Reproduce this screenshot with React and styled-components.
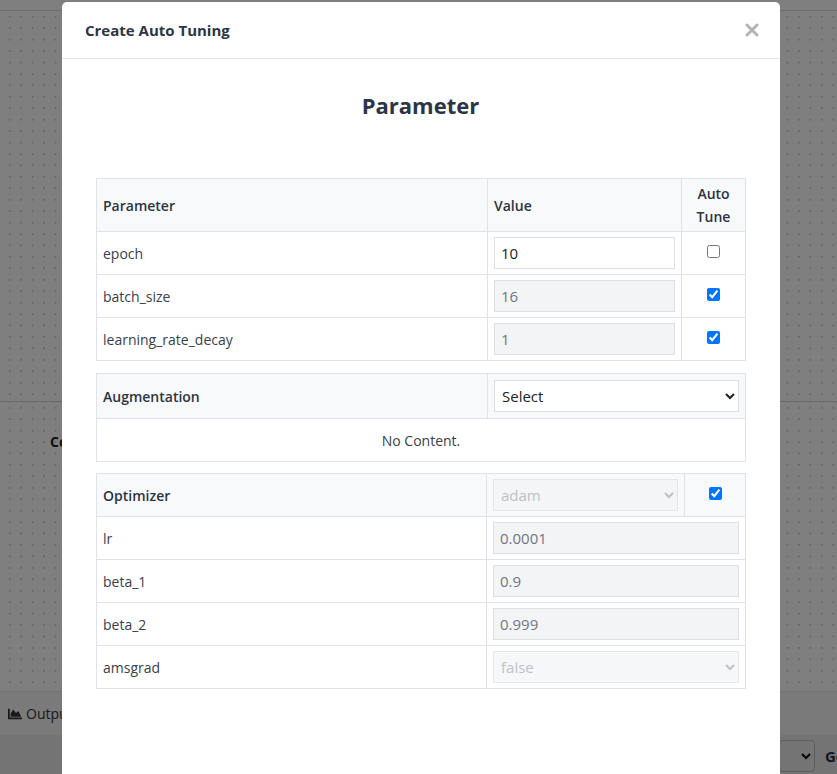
import React from 'react';
import styled, { createGlobalStyle } from 'styled-components';
import { FaChartArea } from 'react-icons/fa';

const GlobalStyle = createGlobalStyle`
    html, body {
        margin: 0;
        padding: 0;
        height: 100%;
        overflow: hidden;
        font-family: "Open Sans", "Noto Sans", "Liberation Sans", sans-serif;
        color: #2d3440;
    }
    * { box-sizing: border-box; }
`;

const BASE_PARAMS = [
    { name: 'epoch', value: '10', auto: false },
    { name: 'batch_size', value: '16', auto: true },
    { name: 'learning_rate_decay', value: '1', auto: true },
];

const OPTIMIZER_PARAMS = [
    { name: 'lr', value: '0.0001' },
    { name: 'beta_1', value: '0.9' },
    { name: 'beta_2', value: '0.999' },
    { name: 'amsgrad', value: 'false', select: true },
];

function ParamRow ({ item }) {
    return (
        <tr>
            <Cell $h={43}>{item.name}</Cell>
            <Cell $h={43}>
                <TextInput defaultValue={item.value} disabled={item.auto} />
            </Cell>
            <Cell $h={43} $center>
                <Check type="checkbox" defaultChecked={item.auto} />
            </Cell>
        </tr>
    );
}

function OptimizerRow ({ item }) {
    return (
        <tr>
            <Cell $h={43}>{item.name}</Cell>
            <Cell $h={43} colSpan={2}>
                {item.select ? (
                    <Dropdown disabled defaultValue={item.value}>
                        <option value="false">false</option>
                        <option value="true">true</option>
                    </Dropdown>
                ) : (
                    <TextInput defaultValue={item.value} disabled />
                )}
            </Cell>
        </tr>
    );
}

const App = () => {
    return (
        <>
            <GlobalStyle />
            <Page>
                <TopBar />
                <Canvas />
                <Section>
                    <SectionTitle>Configuration</SectionTitle>
                </Section>
                <TabBar>
                    <Tab><FaChartArea size={14} /> Output</Tab>
                </TabBar>
                <BottomBar>
                    <SmallSelect><option value=""></option></SmallSelect>
                    <GoLabel>Go</GoLabel>
                </BottomBar>
            </Page>

            <Overlay>
                <Modal>
                    <ModalHeader>
                        <ModalTitle>Create Auto Tuning</ModalTitle>
                        <CloseButton aria-label="close">
                            <svg width="14" height="14" viewBox="0 0 14 14">
                                <path d="M2 2 L12 12 M12 2 L2 12" stroke="#b4b4b4" strokeWidth="3" strokeLinecap="round" />
                            </svg>
                        </CloseButton>
                    </ModalHeader>
                    <ModalBody>
                        <Heading>Parameter</Heading>

                        <Table $gap={12}>
                            <colgroup>
                                <col style={{ width: 391 }} />
                                <col style={{ width: 194 }} />
                                <col style={{ width: 64 }} />
                            </colgroup>
                            <thead>
                                <tr>
                                    <HeadCell $h={53}>Parameter</HeadCell>
                                    <HeadCell $h={53}>Value</HeadCell>
                                    <HeadCell $h={53} $center>Auto<br />Tune</HeadCell>
                                </tr>
                            </thead>
                            <tbody>
                                {BASE_PARAMS.map((item) => (<ParamRow key={item.name} item={item} />))}
                            </tbody>
                        </Table>

                        <Table $gap={11}>
                            <colgroup>
                                <col style={{ width: 391 }} />
                                <col style={{ width: 258 }} />
                            </colgroup>
                            <thead>
                                <tr>
                                    <HeadCell $h={45}>Augmentation</HeadCell>
                                    <HeadCell $h={45}>
                                        <Dropdown defaultValue="">
                                            <option value="">Select</option>
                                            <option value="flip">flip</option>
                                        </Dropdown>
                                    </HeadCell>
                                </tr>
                            </thead>
                            <tbody>
                                <tr>
                                    <Cell $h={43} $center colSpan={2}>No Content.</Cell>
                                </tr>
                            </tbody>
                        </Table>

                        <Table $gap={12}>
                            <colgroup>
                                <col style={{ width: 390 }} />
                                <col style={{ width: 198 }} />
                                <col style={{ width: 61 }} />
                            </colgroup>
                            <thead>
                                <tr>
                                    <HeadCell $h={43}>Optimizer</HeadCell>
                                    <HeadCell $h={43}>
                                        <Dropdown disabled defaultValue="adam">
                                            <option value="adam">adam</option>
                                            <option value="sgd">sgd</option>
                                        </Dropdown>
                                    </HeadCell>
                                    <HeadCell $h={43} $center>
                                        <Check type="checkbox" defaultChecked />
                                    </HeadCell>
                                </tr>
                            </thead>
                            <tbody>
                                {OPTIMIZER_PARAMS.map((item) => (<OptimizerRow key={item.name} item={item} />))}
                            </tbody>
                        </Table>
                    </ModalBody>
                </Modal>
            </Overlay>
        </>
    );
};

export default App;

// ---------------- background page ----------------
const Page = styled.div`
    height: 100vh;
    display: flex;
    flex-direction: column;
    background: #ffffff;
`;
const TopBar = styled.div`
    height: 11px;
    border-bottom: 1px solid #dadada;
    background: #fff;
`;
const dots = `
    background-color: #ffffff;
    background-image: radial-gradient(circle, #d4d4d4 1.1px, transparent 1.3px);
    background-size: 11.45px 11.45px;
    background-position: 4px 0px;
`;
const Canvas = styled.div`
    height: 391px;
    ${dots}
    border-bottom: 1px solid #d0d0d0;
`;
const Section = styled.div`
    flex: 1;
    ${dots}
    padding: 30px 0 0 50px;
    border-bottom: 1px solid #e4e4e4;
`;
const SectionTitle = styled.div`
    font-size: 14px;
    font-weight: 700;
    color: #222;
`;
const TabBar = styled.div`
    height: 43px;
    display: flex;
    background: #f4f4f4;
`;
const Tab = styled.div`
    display: flex;
    align-items: center;
    gap: 4px;
    padding: 0 10px 0 8px;
    background: #f4f4f4;
    font-size: 14px;
    color: #333;
`;
const BottomBar = styled.div`
    height: 39px;
    display: flex;
    justify-content: flex-end;
    align-items: flex-start;
    gap: 10px;
    background: #e9e9e9;
    overflow: hidden;
`;
const SmallSelect = styled.select`
    width: 36px;
    height: 32px;
    margin-top: 5px;
    border: 1px solid #bbb;
    border-radius: 4px;
    background: #e9e9e9;
`;
const GoLabel = styled.div`
    width: 12px;
    font-size: 15px;
    font-weight: 700;
    line-height: 20px;
    color: #1f2f44;
    margin-top: 11px;
    overflow: hidden;
`;

// ---------------- modal ----------------
const Overlay = styled.div`
    position: fixed;
    inset: 0;
    background: rgba(0, 0, 0, 0.5);
    padding: 2px 0 0 62px;
`;
const Modal = styled.div`
    width: 718px;
    height: 820px;
    background: #ffffff;
    border-radius: 5px 5px 0 0;
    display: flex;
    flex-direction: column;
`;
const ModalHeader = styled.div`
    height: 57px;
    flex-shrink: 0;
    display: flex;
    align-items: center;
    justify-content: space-between;
    padding: 0 21px 0 23px;
    border-bottom: 1px solid #e4e4e4;
`;
const ModalTitle = styled.div`
    font-size: 15px;
    font-weight: 700;
    color: #2b3545;
`;
const CloseButton = styled.button`
    border: none;
    background: none;
    padding: 0;
    display: flex;
    cursor: pointer;
`;
const ModalBody = styled.div`
    padding: 30px 35px 0 34px;
`;
const Heading = styled.h2`
    margin: 0 0 56px;
    text-align: center;
    font-size: 22px;
    line-height: 33px;
    font-weight: 700;
    color: #2b3545;
`;
const Table = styled.table`
    width: 649px;
    border-collapse: collapse;
    table-layout: fixed;
    margin-bottom: ${(p) => p.$gap}px;
`;
const Cell = styled.td`
    height: ${(p) => p.$h}px;
    padding: 0 6px;
    border: 1px solid #dfe2e8;
    font-size: 14px;
    line-height: 21px;
    color: #3a4049;
    vertical-align: middle;
    text-align: ${(p) => (p.$center ? 'center' : 'left')};
`;
const HeadCell = styled(Cell).attrs({ as: 'th' })`
    background: #f8f9fb;
    font-weight: 600;
    line-height: 23px;
    color: #2d3440;
`;
const TextInput = styled.input`
    display: block;
    width: 100%;
    height: 32px;
    padding: 0 6px;
    border: 1px solid #dcdfe4;
    border-radius: 0;
    font-family: inherit;
    font-size: 15px;
    color: #1d2228;
    background: #ffffff;
    outline: none;
    &:disabled {
        background: #f3f4f6;
        color: #707780;
    }
`;
const Dropdown = styled.select`
    display: block;
    width: 100%;
    height: 32px;
    padding: 0 3px;
    border: 1px solid #dcdfe4;
    border-radius: 0;
    font-family: inherit;
    font-size: 15px;
    color: #1d2228;
    background: #ffffff;
    &:disabled {
        background: #f3f4f6;
        color: #a3a8ae;
    }
`;
const Check = styled.input`
    display: block;
    width: 13px;
    height: 13px;
    margin: 0 auto 3px;
`;
